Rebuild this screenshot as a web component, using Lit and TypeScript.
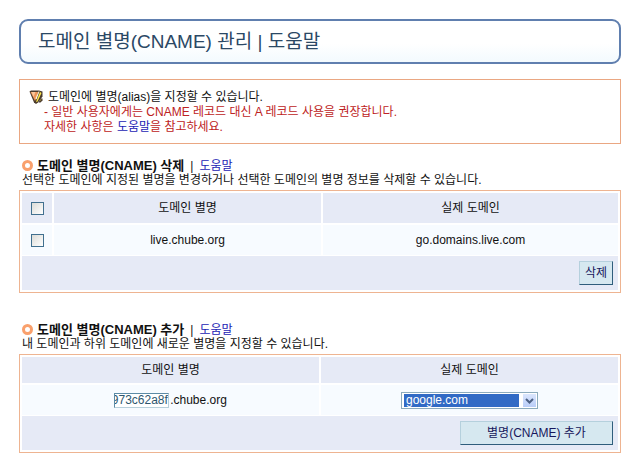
import { LitElement, html, css } from "lit";
import { customElement, property } from "lit/decorators.js";

const shared = css`
  * {
    box-sizing: border-box;
  }
  a {
    color: #1c1cb4;
    text-decoration: none;
  }
`;

@customElement("section-heading")
export class SectionHeading extends LitElement {
  @property() heading = "";
  @property() description = "";

  static styles = [
    shared,
    css`
      :host {
        display: block;
        padding-left: 3px;
        line-height: 14px;
      }
      .line {
        display: flex;
        align-items: center;
        gap: 6px;
        height: 13px;
      }
      .ring {
        flex: none;
        width: 11px;
        height: 11px;
        border: 3px solid #f9a06c;
        border-radius: 50%;
      }
      h2 {
        margin: 0 0 0 -2px;
        font-size: 13px;
        font-weight: 700;
      }
      p {
        margin: 0;
        padding-top: 1px;
      }
    `,
  ];

  render() {
    return html`
      <div class="line">
        <span class="ring"></span>
        <h2>${this.heading}</h2>
        <span>|</span>
        <a href="#help">도움말</a>
      </div>
      <p>${this.description}</p>
    `;
  }
}

@customElement("app-root")
export class AppRoot extends LitElement {
  static styles = [
    shared,
    css`
      :host {
        display: block;
        padding: 19px;
        background: #fff;
        color: #111;
        font: 12px/15px "Liberation Sans", "Noto Sans CJK KR", sans-serif;
      }
      .title {
        display: flex;
        align-items: center;
        height: 45px;
        margin: 0 0 15px;
        padding: 0 17px;
        border: 2px solid #607faf;
        border-radius: 9px;
        background: linear-gradient(#fff 55%, #f3fafe);
        color: #2b4865;
        font-size: 19px;
        font-weight: 400;
        line-height: 24px;
      }
      .notice {
        display: flex;
        height: 65px;
        margin-bottom: 15px;
        padding: 10px 9px;
        border: 1px solid #eaa782;
      }
      .notice p {
        margin: 0;
      }
      .pencil {
        flex: none;
        width: 15px;
        height: 15px;
      }
      .lead {
        padding-left: 4px;
      }
      .warn {
        color: #bd2222;
      }
      table {
        width: 100%;
        margin-top: 3px;
        padding: 1px;
        border: 1px solid #eeb491;
        border-collapse: separate;
        border-spacing: 0;
        table-layout: fixed;
      }
      form + form {
        margin-top: 30px;
      }
      th,
      td {
        height: 32px;
        padding: 0;
        border: 1px solid #fff;
        font-weight: 400;
        text-align: center;
      }
      th {
        padding-top: 1px;
        background: #e6eaf6;
      }
      td {
        background: #f7fbff;
      }
      .compact th {
        height: 28px;
      }
      .pick {
        width: 32px;
      }
      .name {
        width: 45%;
      }
      .actions {
        height: 35px;
        padding-right: 5px;
        border-top: 0;
        background: #e6eaf6;
        text-align: right;
      }
      input[type="checkbox"] {
        appearance: none;
        display: block;
        width: 13px;
        height: 13px;
        margin: 0 auto;
        border: 1px solid #41708f;
        background: linear-gradient(135deg, #dcdcd7, #fff);
      }
      input[type="checkbox"]:checked {
        background: #41708f;
      }
      button {
        height: 24px;
        padding: 0 5px;
        border: 1px solid;
        border-color: #b5d0dd #2f5d7c #2f5d7c #b5d0dd;
        background: #d6e8f0;
        color: #17175c;
        font: inherit;
        vertical-align: middle;
      }
      .wide {
        width: 153px;
      }
      .alias {
        display: inline-flex;
        align-items: center;
        gap: 1px;
      }
      .alias input {
        width: 55px;
        height: 15px;
        padding: 0;
        border: 1px solid;
        border-color: #5c8ba5 #b7cfda #b7cfda #5c8ba5;
        outline: 0;
        background: #fff;
        color: #2e566e;
        font: inherit;
      }
      .dropdown {
        display: inline-block;
        position: relative;
        width: 137px;
        height: 17px;
        background: #fff;
        vertical-align: middle;
      }
      select {
        appearance: none;
        display: block;
        width: 100%;
        height: 17px;
        padding: 1px 18px 1px 2px;
        border: 1px solid #8cabbd;
        border-radius: 0;
        outline: 0;
        background: #316ac5 content-box;
        color: #fff;
        font: 12px/13px "Liberation Sans", "Noto Sans CJK KR", sans-serif;
        text-indent: 2px;
      }
      .arrow {
        position: absolute;
        top: 2px;
        right: 2px;
        width: 13px;
        height: 13px;
        background: linear-gradient(#dbe6fd, #b9cdf8);
        pointer-events: none;
      }
    `,
  ];

  firstUpdated() {
    const name = this.renderRoot.querySelector<HTMLInputElement>("#alias-name");
    if (name) name.scrollLeft = name.scrollWidth;
  }

  render() {
    return html`
      <h1 class="title">도메인 별명(CNAME) 관리 | 도움말</h1>

      <div class="notice">
        <svg class="pencil" viewBox="0 0 15 15" aria-hidden="true">
          <path d="M.5 1.500 2 .5h8l3.500 1v5L9 12.500l-2 1.500-2-1.500z" fill="#4a3b2c" />
          <path d="M1.500 2h7.500l-1 5-2 4z" fill="#ee9458" />
          <path d="M2.500 2h4l-2 5z" fill="#f9c79c" />
          <path d="M9.500 1.500h1l-3 8-1-1z" fill="#fffbe0" />
          <path d="M11 2l1.500 1-4 8.500L7 12z" fill="#ffe84a" />
          <path d="M11.500 8.500h2v2l-2 2h-2z" fill="#4a3b2c" />
          <path d="M11.500 9.500h1l-1 1.500z" fill="#f7dc59" />
        </svg>
        <div>
          <p class="lead">도메인에 별명(alias)을 지정할 수 있습니다.</p>
          <p class="warn">- 일반 사용자에게는 CNAME 레코드 대신 A 레코드 사용을 권장합니다.</p>
          <p class="warn">자세한 사항은 <a href="#help">도움말</a>을 참고하세요.</p>
        </div>
      </div>

      <form @submit=${(e: Event) => e.preventDefault()}>
        <section-heading
          heading="도메인 별명(CNAME) 삭제"
          description="선택한 도메인에 지정된 별명을 변경하거나 선택한 도메인의 별명 정보를 삭제할 수 있습니다."
        ></section-heading>
        <table>
          <thead>
            <tr>
              <th class="pick"><input type="checkbox" aria-label="전체 선택" /></th>
              <th class="name">도메인 별명</th>
              <th>실제 도메인</th>
            </tr>
          </thead>
          <tbody>
            <tr>
              <td><input type="checkbox" aria-label="live.chube.org" /></td>
              <td>live.chube.org</td>
              <td>go.domains.live.com</td>
            </tr>
            <tr>
              <td class="actions" colspan="3"><button>삭제</button></td>
            </tr>
          </tbody>
        </table>
      </form>

      <form @submit=${(e: Event) => e.preventDefault()}>
        <section-heading
          heading="도메인 별명(CNAME) 추가"
          description="내 도메인과 하위 도메인에 새로운 별명을 지정할 수 있습니다."
        ></section-heading>
        <table class="compact">
          <thead>
            <tr>
              <th>도메인 별명</th>
              <th>실제 도메인</th>
            </tr>
          </thead>
          <tbody>
            <tr>
              <td>
                <label class="alias">
                  <input id="alias-name" type="text" value="5973c62a8f" aria-label="도메인 별명" />.chube.org
                </label>
              </td>
              <td>
                <span class="dropdown">
                  <select aria-label="실제 도메인">
                    <option>google.com</option>
                  </select>
                  <svg class="arrow" viewBox="0 0 13 13" aria-hidden="true">
                    <path d="m3 5 3.500 3.500L10 5" fill="none" stroke="#4d6185" stroke-width="2" />
                  </svg>
                </span>
              </td>
            </tr>
            <tr>
              <td class="actions" colspan="2"><button class="wide">별명(CNAME) 추가</button></td>
            </tr>
          </tbody>
        </table>
      </form>
    `;
  }
}
